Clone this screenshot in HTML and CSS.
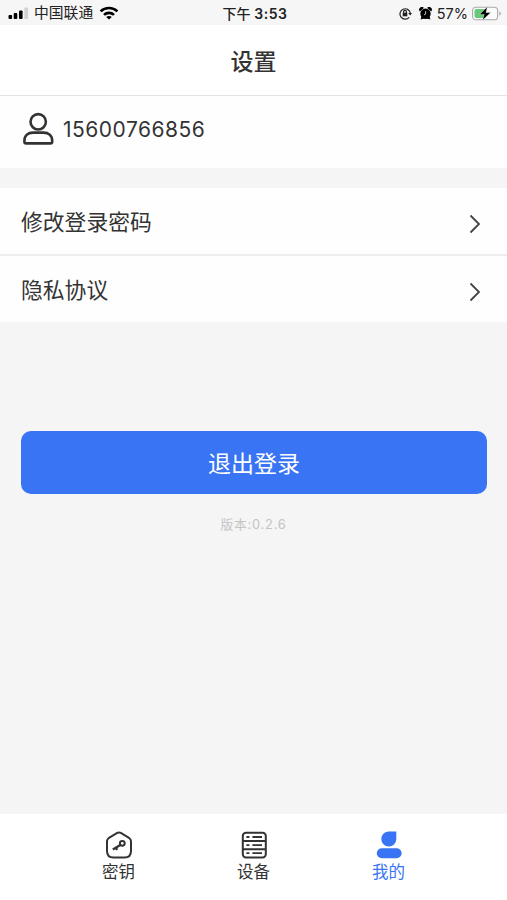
FILE: index.html
```html
<!DOCTYPE html>
<html lang="zh-CN">
<head>
    <meta charset="UTF-8">
    <meta name="viewport" content="width=device-width, initial-scale=1.0">
    <title>设置</title>
    <link rel="stylesheet" href="styles.css">
</head>
<body>

    <!-- Barre d'état -->
    <div class="status-bar">
        <div class="status-left">
            <svg class="signal" width="22" height="14" viewBox="0 0 22 14">
                <rect x="0.5" y="9" width="3.6" height="4" rx="1"/>
                <rect x="5.7" y="7" width="3.6" height="6" rx="1"/>
                <rect x="11" y="4.5" width="3.6" height="8.5" rx="1"/>
                <rect x="16.3" y="1.5" width="3.8" height="11.5" rx="1" fill="#d2d2d2"/>
            </svg>
            <span class="carrier">中国联通</span>
            <svg class="wifi" width="20" height="14" viewBox="0 0 20 14" fill="none" stroke="#000" stroke-width="2.6">
                <path d="M1.6 5.4C6.3 0.9 13.7 0.9 18.4 5.4"/>
                <path d="M5 8.9C7.8 6.2 12.2 6.2 15 8.9"/>
                <path d="M10 13.6L7.2 11C8.8 9.6 11.2 9.6 12.8 11Z" fill="#000" stroke="none"/>
            </svg>
        </div>
        <div class="status-time">下午 <b>3:53</b></div>
        <div class="status-right">
            <svg class="lock" width="13" height="13" viewBox="0 0 13 13" fill="none" stroke="#222" stroke-width="1.2">
                <path d="M10.2 10.3A5.2 5.2 0 1 1 11.3 6"/>
                <path d="M9.2 5.9H13L11.2 8.5Z" fill="#222" stroke="none"/>
                <rect x="3.7" y="5.7" width="4.6" height="3.6" fill="#222" stroke="none"/>
                <path d="M4.6 6V4.8A1.4 1.4 0 0 1 7.4 4.8V6"/>
            </svg>
            <svg class="alarm" width="13" height="13" viewBox="0 0 13 13">
                <circle cx="6.5" cy="6.8" r="5.2"/>
                <path d="M0.8 4.4A2.4 2.4 0 0 1 4.8 0.9ZM12.2 4.4A2.4 2.4 0 0 0 8.2 0.9ZM1.6 12.4L2.4 9.5L5 11.5ZM11.4 12.4L10.6 9.5L8 11.5Z"/>
                <path d="M6.6 4.2V7L5 7.9" fill="none" stroke="#ddd" stroke-width="0.9"/>
            </svg>
            <span class="percent">57%</span>
            <svg class="battery" width="30" height="15" viewBox="0 0 30 15">
                <rect x="0.6" y="1.2" width="25" height="12.6" rx="3.4" fill="#fbfbfb" stroke="#aaa" stroke-width="1.1"/>
                <path d="M4.5 3H13.5V12H4.5A2 2 0 0 1 2.5 10V5A2 2 0 0 1 4.5 3Z" fill="#65c978"/>
                <path d="M27.3 5.3C29.4 6.2 29.4 8.8 27.3 9.7Z" fill="#aaa"/>
                <path d="M15.4 0.8L7.5 8.4H12.2L10.6 14.2L18.8 6.5H14Z" stroke="#fff" stroke-width="0.4"/>
            </svg>
        </div>
    </div>

    <header>设置</header>

    <div class="user">
        <svg width="32" height="34" viewBox="0 0 32 34" fill="none" stroke="#333" stroke-width="2.6">
            <circle cx="16.2" cy="9.8" r="7.7"/>
            <path d="M2.4 28.8C2.4 23.5 6 20.6 11 20.6H21.5C26.5 20.6 30.2 23.5 30.2 28.8V29.7Q30.2 31.4 28.5 31.4H4.1Q2.4 31.4 2.4 29.7Z"/>
        </svg>
        <span>15600766856</span>
    </div>

    <div class="menu">
        <a class="menu-item">
            <span>修改登录密码</span>
            <svg class="arrow" width="12" height="20" viewBox="0 0 12 20"><path d="M1.5 1.5L10 10L1.5 18.5"/></svg>
        </a>
        <a class="menu-item">
            <span>隐私协议</span>
            <svg class="arrow" width="12" height="20" viewBox="0 0 12 20"><path d="M1.5 1.5L10 10L1.5 18.5"/></svg>
        </a>
    </div>

    <button class="logout">退出登录</button>
    <p class="version">版本:0.2.6</p>

    <nav>
        <a class="tab">
            <svg width="28" height="28" viewBox="0 0 28 28" fill="none" stroke="#333" stroke-width="2">
                <path d="M12.2 1.9Q14 0.9 15.8 1.9L24.4 7.2Q26 8.3 26 10.2V20Q26 26.6 19.5 26.6H8.5Q2 26.6 2 20V10.2Q2 8.3 3.6 7.2Z"/>
                <circle cx="17.3" cy="12.3" r="2.4"/>
                <path d="M15.3 14L7.8 18.4M11 16.8L12.2 18.8" stroke-width="2.3"/>
            </svg>
            <span>密钥</span>
        </a>
        <a class="tab">
            <svg width="28" height="28" viewBox="0 0 28 28" fill="none" stroke="#333" stroke-width="2">
                <rect x="2.8" y="1.8" width="23" height="24.6" rx="3.2"/>
                <path d="M3 10H26M3 18.2H26"/>
                <path d="M6.4 6H9.4M12.4 6H22M6.4 14.1H9.4M12.4 14.1H22M6.4 22.2H9.4M12.4 22.2H22" stroke-width="1.8"/>
            </svg>
            <span>设备</span>
        </a>
        <a class="tab active">
            <svg width="28" height="28" viewBox="0 0 28 28" fill="#3874f4">
                <path d="M14 0.5H21.3V8.1A7.5 7.5 0 1 1 14 0.5Z"/>
                <rect x="1.8" y="17.2" width="24.8" height="10" rx="5"/>
            </svg>
            <span>我的</span>
        </a>
    </nav>

</body>
</html>
```
FILE: styles.css
```css
* {
    box-sizing: border-box;
}

body {
    font-family: Inter, "Noto Sans CJK SC", sans-serif;
    margin: 0;
    height: 900px;
    display: flex;
    flex-direction: column;
    background: #f5f5f5;
    color: #333;
}

svg {
    display: block;
    flex: none;
}

.status-bar {
    height: 25px;
    padding: 2px 5px 0 8px;
    display: grid;
    grid-template-columns: 1fr auto 1fr;
    align-items: center;
    background: #f6f6f6;
    font-size: 14.5px;
    line-height: 23px;
    color: #222;
}

.status-left, .status-right {
    display: flex;
    align-items: center;
}

.status-right {
    justify-content: flex-end;
}

.signal, .wifi, .lock, .alarm, .battery {
    margin-top: -1px;
}

.carrier {
    margin: 0 6px 0 4px;
    font-size: 14.8px;
}

.status-time {
    font-size: 14px;
    font-weight: 500;
}

.status-time b {
    font-weight: 600;
    letter-spacing: 0.5px;
}

.alarm {
    margin-left: 7px;
    margin-right: 5px;
}

.percent {
    margin-right: 4px;
}

header {
    height: 71px;
    padding-top: 2px;
    background: #fff;
    border-bottom: 1px solid #e4e4e4;
    font-size: 23px;
    font-weight: 500;
    line-height: 70px;
    text-align: center;
}

.user {
    height: 72px;
    padding: 0 22px 6px;
    display: flex;
    align-items: center;
    gap: 9px;
    background: #fefefe;
    font-size: 21px;
    letter-spacing: 0.5px;
}

.menu {
    margin-top: 20px;
    background: #fefefe;
}

.menu-item {
    height: 66px;
    padding: 0 26px 2px 21px;
    display: flex;
    align-items: center;
    justify-content: space-between;
    font-size: 21.8px;
}

.menu-item + .menu-item {
    height: 68px;
    border-top: 2px solid #eee;
}

.arrow {
    margin-top: 7px;
    fill: none;
    stroke: #444;
    stroke-width: 1.8;
}

.logout {
    height: 63px;
    margin: 109px 20px 0 21px;
    padding: 0 0 2px;
    border: none;
    border-radius: 10px;
    background: #3874f4;
    color: #fff;
    font-family: inherit;
    font-size: 23px;
}

.version {
    margin: 21px 0 0;
    font-size: 12.8px;
    line-height: 20px;
    letter-spacing: 0.8px;
    text-align: center;
    color: #c4c4c4;
}

nav {
    height: 86px;
    margin-top: auto;
    padding: 17px 51px 0;
    display: flex;
    background: #fff;
}

.tab {
    flex: 1;
    display: flex;
    flex-direction: column;
    align-items: center;
    font-size: 16.5px;
    line-height: 26px;
}

.tab.active {
    color: #3874f4;
}
```
